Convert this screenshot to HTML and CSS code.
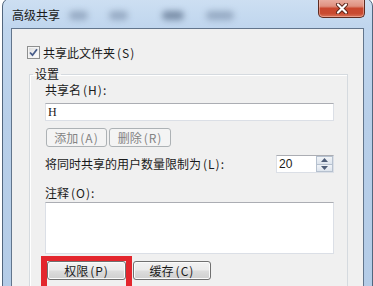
FILE: index.html
```html
<!DOCTYPE html>
<html lang="zh-CN">
<head>
<meta charset="utf-8">
<title>高级共享</title>
<link rel="stylesheet" href="styles.css">
</head>
<body>
<div class="window">
  <div class="titlebar">
    <span class="title">高级共享</span>
    <span class="blur b1"></span>
    <span class="blur b2"></span>
    <span class="blur b3"></span>
    <span class="blur b4"></span>
    <span class="close">
      <svg width="14" height="11" viewBox="0 0 14 11">
        <path d="M3 1.5 L11 9.5 M11 1.5 L3 9.5" stroke="#5a2418" stroke-width="4" stroke-linecap="round"/>
        <path d="M3 1.5 L11 9.5 M11 1.5 L3 9.5" stroke="#ffffff" stroke-width="2.2" stroke-linecap="round"/>
      </svg>
    </span>
  </div>
  <div class="client">
    <div class="check-row">
      <span class="checkbox">
        <svg width="11" height="11" viewBox="0 0 11 11">
          <path d="M2 5.5 L4.5 8.2 L9 2.2" fill="none" stroke="#485d8a" stroke-width="1.8"/>
        </svg>
      </span>
      <span>共享此文件夹<span class="hk">(S)</span></span>
    </div>
    <fieldset class="group">
      <legend>设置</legend>
      <div class="group-body">
        <div class="label">共享名<span class="hk">(H)</span>:</div>
        <div class="input">H</div>
        <div class="btn-row">
          <span class="btn disabled add">添加<span class="hk">(A)</span></span>
          <span class="btn disabled del">删除<span class="hk">(R)</span></span>
        </div>
        <div class="limit-row">
          <span>将同时共享的用户数量限制为<span class="hk">(L)</span>:</span>
          <div class="spinner">
            <span class="val">20</span>
            <span class="arrows">
              <span class="arr up"><svg width="7" height="4" viewBox="0 0 7 4"><path d="M0 4 L3.5 0 L7 4 Z" fill="#4e5d78"/></svg></span>
              <span class="arr down"><svg width="7" height="4" viewBox="0 0 7 4"><path d="M0 0 L3.5 4 L7 0 Z" fill="#4e5d78"/></svg></span>
            </span>
          </div>
        </div>
        <div class="label notes-label">注释<span class="hk">(O)</span>:</div>
        <div class="textarea"></div>
        <div class="btn-row bottom">
          <span class="highlight"><span class="btn perm">权限<span class="hk">(P)</span></span></span>
          <span class="btn cache">缓存<span class="hk">(C)</span></span>
        </div>
      </div>
    </fieldset>
  </div>
</div>
</body>
</html>
```

FILE: styles.css
```css
html, body {
  margin: 0;
  padding: 0;
}

body {
  width: 373px;
  height: 286px;
  overflow: hidden;
  background: #ffffff;
  font-family: "Noto Sans CJK SC", "Noto Sans", sans-serif;
  font-size: 12px;
  line-height: 12px;
  color: #1a1a1a;
}

.window {
  box-sizing: border-box;
  width: 371px;
  height: 300px;
  margin: -2px 0 0 2px;
  border: 1px solid #52667e;
  border-radius: 8px 8px 0 0;
  background: linear-gradient(to bottom, #cddff2 0px, #c0d6ee 28px, #b8cfe9 120px, #b4cce7 300px);
  overflow: hidden;
}

.titlebar {
  display: flex;
  align-items: center;
  height: 29px;
}

.title {
  padding-left: 9px;
  padding-top: 2px;
}

.blur {
  height: 9px;
  margin-top: 3px;
  border-radius: 5px;
  background: rgba(80, 100, 130, 0.4);
  filter: blur(3px);
}

.b1 { width: 19px; margin-left: 9px; }
.b2 { width: 19px; margin-left: 21px; }
.b3 { width: 22px; margin-left: 34px; background: rgba(60, 80, 110, 0.55); }
.b4 { width: 28px; margin-left: 22px; }

.close {
  box-sizing: border-box;
  display: flex;
  align-items: center;
  justify-content: center;
  align-self: flex-start;
  width: 47px;
  height: 19px;
  margin-left: auto;
  margin-right: 7px;
  border: 1px solid #5e2b21;
  border-top: none;
  border-radius: 0 0 5px 5px;
  background: linear-gradient(to bottom, #eab0a3 0%, #df9180 40%, #c9482f 52%, #c94a30 80%, #d9735a 100%);
  box-shadow: inset 0 0 0 1px rgba(255, 210, 200, 0.45);
}

.client {
  box-sizing: border-box;
  width: 353px;
  height: 280px;
  margin-left: 8px;
  padding-top: 17px;
  border: 1px solid #62758c;
  border-bottom: none;
  background: #f0f0f0;
}

.check-row {
  display: flex;
  align-items: center;
  height: 13px;
  margin-left: 15px;
}

.checkbox {
  box-sizing: border-box;
  display: flex;
  align-items: center;
  justify-content: center;
  width: 13px;
  height: 13px;
  margin-right: 3px;
  border: 1px solid #8e8f8f;
  background: linear-gradient(135deg, #d8d8d8 0%, #f4f4f4 60%, #ffffff 100%);
  box-shadow: inset 0 0 0 1px #f4f4f4;
}

.hk {
  margin-left: 2px;
  letter-spacing: 1px;
}

.group {
  margin: 9px 15px 0 17px;
  padding: 0;
  border: 1px solid #d5dadf;
  box-shadow: inset 1px 1px 0 #ffffff;
}

.group legend {
  margin-left: 3px;
  padding: 0 2px;
  line-height: 12px;
}

.group-body {
  padding: 4px 13px 40px 15px;
}

.label {
  height: 12px;
}

.input {
  box-sizing: border-box;
  height: 18px;
  margin-top: 7px;
  padding-left: 2px;
  border: 1px solid #dbdfe6;
  border-top-color: #abadb3;
  background: #ffffff;
  font-family: "Liberation Serif", serif;
  font-size: 12px;
  line-height: 16px;
}

.btn-row {
  display: flex;
  margin-top: 7px;
}

.btn {
  box-sizing: border-box;
  display: flex;
  align-items: center;
  justify-content: center;
  height: 19px;
  border: 1px solid #707070;
  border-radius: 3px;
  background: linear-gradient(to bottom, #f2f2f2 0%, #ebebeb 48%, #dddddd 52%, #cfcfcf 100%);
  box-shadow: inset 0 0 0 1px #fbfbfb;
}

.btn.disabled {
  border-color: #adb2b5;
  background: #f4f4f4;
  box-shadow: none;
  color: #838383;
}

.add { width: 61px; margin-left: 1px; }
.del { width: 62px; margin-left: 2px; }

.limit-row {
  display: flex;
  align-items: center;
  justify-content: space-between;
  height: 18px;
  margin-top: 8px;
}

.spinner {
  box-sizing: border-box;
  display: flex;
  width: 58px;
  height: 18px;
  border: 1px solid #dbdfe6;
  border-top-color: #abadb3;
  background: #ffffff;
}

.spinner .val {
  flex: 1;
  padding-left: 2px;
  font-family: "Liberation Sans", sans-serif;
  font-size: 12px;
  line-height: 17px;
}

.arrows {
  display: flex;
  flex-direction: column;
  width: 17px;
}

.arr {
  box-sizing: border-box;
  display: flex;
  align-items: center;
  justify-content: center;
  flex: 1;
  border: 1px solid #b6c1cf;
  background: linear-gradient(to bottom, #f1f4f8 0%, #dde4ed 100%);
}

.arr.down {
  border-top: none;
}

.notes-label {
  margin-top: 14px;
}

.textarea {
  box-sizing: border-box;
  height: 52px;
  margin-top: 3px;
  border: 1px solid #dbdfe6;
  border-top-color: #abadb3;
  background: #ffffff;
}

.btn-row.bottom {
  margin-top: 7px;
}

.highlight {
  position: relative;
  margin-left: 2px;
}

.highlight::after {
  content: "";
  position: absolute;
  top: -5px;
  left: -6px;
  right: -6px;
  bottom: -20px;
  border: 6px solid #e3262d;
  border-top-width: 5px;
  pointer-events: none;
}

.perm { width: 79px; }
.cache { width: 78px; margin-left: 7px; }
```
